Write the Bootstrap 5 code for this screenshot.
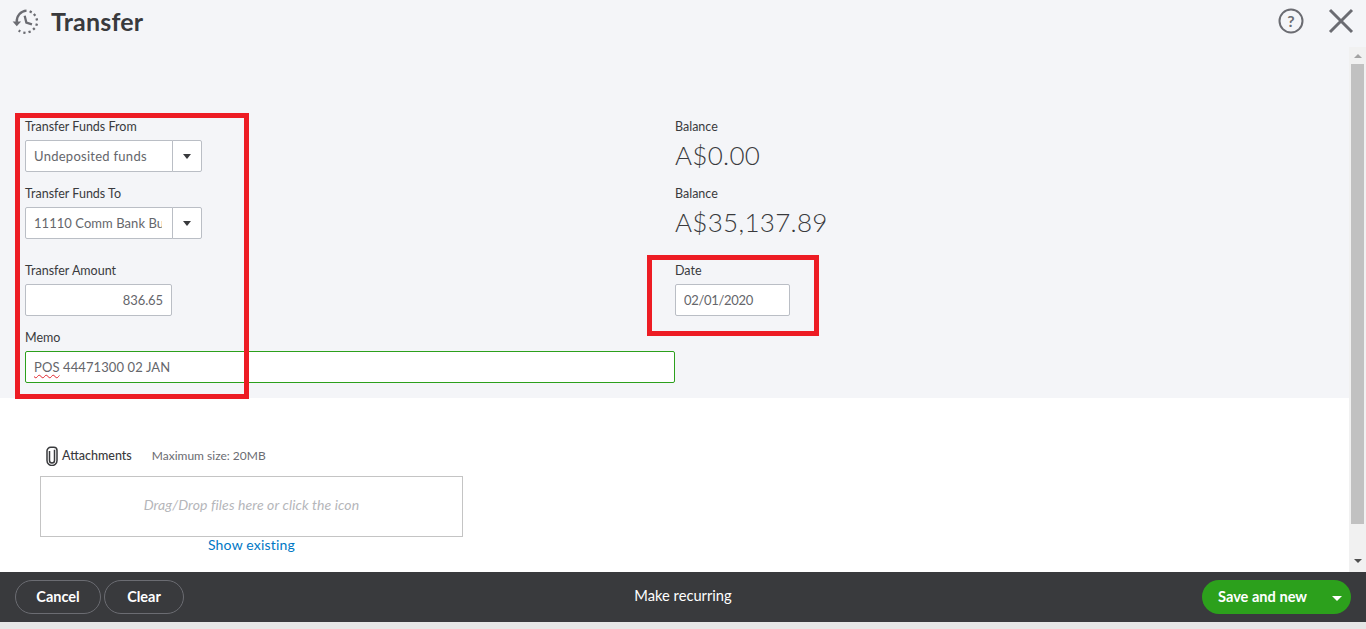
<!DOCTYPE html>
<html lang="en">
<head>
<meta charset="utf-8">
<title>Transfer</title>
<link rel="stylesheet" href="https://cdn.jsdelivr.net/npm/bootstrap@5.3.0/dist/css/bootstrap.min.css">
<style>
html,body{height:100%;overflow:hidden}
body{font-family:"Lato","Liberation Sans",sans-serif;color:#393a3d;background:#e6e6e6;font-size:13px}
.shell{position:relative;height:629px;width:1366px}
.top-bar{height:47px;background:#f4f5f8;padding:0 12px 5px 12px}
.top-title{font-size:25px;font-weight:700;color:#393a3d;line-height:1;margin:0 0 0 12px;letter-spacing:.2px}
.tools{gap:24px}
.mid{height:525px}
.content{width:1349px}
.gray-panel{background:#f4f5f8;height:351px;padding:72px 0 0 25px}
.form-grid{display:grid;grid-template-columns:650px 200px;grid-template-rows:67px 77px 67px auto}
.fld-label{display:block;font-size:12.5px;line-height:16px;margin:0 0 5px;color:#393a3d}
.fld-input.form-control{height:32px;font-size:13px;letter-spacing:.27px;font-weight:400;color:#65666b;border:1px solid #babec5;border-radius:2px;padding:0 8px;background:#fff;box-shadow:none}
.w-acct{width:177px}
.w-amt{width:147px}
.w-date{width:115px}
.combo .form-control{flex:none;width:148px}
.fld-input.clip-input.form-control{padding-right:10px;letter-spacing:.05px}
.caret-btn.btn{width:30px;height:32px;padding:0;background:#fff;border:1px solid #babec5;border-left-color:#babec5;border-radius:0 2px 2px 0;display:flex;align-items:center;justify-content:center}
.tri{display:block;width:0;height:0;border-left:4px solid transparent;border-right:4px solid transparent;border-top:5px solid #393a3d}
.fld-input.num-input.form-control{letter-spacing:-.1px}
.fld-input.date-input.form-control{letter-spacing:-.3px}
.amt-input.form-control{text-align:right}
.memo-wrap{grid-column:1 / span 2;width:650px}
.fld-input.memo-box.form-control{border-color:#2ca01c;line-height:30px;letter-spacing:.1px;font-size:13px;width:650px}
.spell{text-decoration:underline wavy #e0262e 1px;text-underline-offset:2px}
.bal-value{font-size:26px;line-height:32px;letter-spacing:.3px;color:#393a3d;font-weight:300;margin-top:-1px}
.white-panel{background:#fff;height:174px;padding:48px 0 0 40px}
.att-row{height:20px;font-size:12.5px;margin-bottom:10px;padding-left:5px}
.att-name{color:#393a3d;margin-left:3px;font-weight:500}
.att-max{color:#6b6c72;margin-left:20px;font-size:12px}
.drop-box{width:423px;height:61px;border:1px solid #c4c4c4;color:#b5b6ba;font-style:italic;font-size:14px;letter-spacing:.1px;padding-bottom:5px}
.show-link{width:423px;display:block;text-align:center;color:#0077c5;text-decoration:none;font-size:14px;line-height:16px;letter-spacing:.2px}
.scroll-track{width:17px;height:525px;background:#f1f1f1;padding:0 2px}
.arrow-up,.arrow-down{display:block;width:0;height:0;border-left:4px solid transparent;border-right:4px solid transparent;margin:0 auto}
.arrow-up{border-bottom:4px solid #a3a3a3;margin-top:7px;margin-bottom:6px}
.arrow-down{border-top:4px solid #505050;margin-top:35px}
.scroll-thumb{width:13px;height:460px;background:#c1c1c1;flex:none}
.foot{height:50px;background:#393a3d;padding:0 15px}
.pill.btn{height:34px;border:1px solid #6b6c72;border-radius:17px;background:transparent;color:#fff;font-weight:700;font-size:14.5px;padding:0;line-height:1}
.pill-cancel{width:86px}
.pill-clear{width:80px;margin-left:3px}
.recur{position:absolute;left:0;right:0;text-align:center;color:#fff;font-size:14.7px;pointer-events:none;padding-bottom:3px}
.save.btn{width:149px;height:34px;border:0;border-radius:17px;background:#2ca01c;color:#fff;font-weight:700;font-size:14.6px;padding:0 9px 0 16px}
.tri-white{display:block;width:0;height:0;border-left:5px solid transparent;border-right:5px solid transparent;border-top:5px solid #fff;margin-top:3px}
.red-mark{position:absolute;border:5px solid #ed1c24;pointer-events:none}
.mark-left{left:15px;top:113px;width:234px;height:286px}
.mark-date{left:647px;top:255px;width:172px;height:81px}
</style>
</head>
<body>
<div class="shell">
  <header class="top-bar d-flex align-items-center justify-content-between">
    <div class="d-flex align-items-center">
      <svg width="27" height="27" viewBox="0 0 26 26" fill="none" stroke="#6b6c72" stroke-width="2.2" aria-hidden="true">
        <path d="M4.6 13.5A10 10 0 0 1 14 2.6" />
        <path d="M17 3.2l2 1M21 5.8l1.5 1.6M23.6 10l.5 2.1M24 15l-.6 2.1M21.9 19.4l-1.6 1.5M18 22.6l-2.1.7M13 23.9l-2.1-.3M8 22.6l-1.6-1"/>
        <path d="M.6 13l4 4.6L8.8 13z" fill="#6b6c72" stroke="none"/>
        <path d="M12.2 7.5l1.6 6.5 5.4 1.8" stroke-width="2.2"/>
      </svg>
      <h1 class="top-title">Transfer</h1>
    </div>
    <div class="tools d-flex align-items-center">
      <svg width="26" height="26" viewBox="0 0 26 26" fill="none" aria-hidden="true">
        <circle cx="13" cy="13" r="11.5" stroke="#6b6c72" stroke-width="2"/>
        <text x="13" y="18.5" text-anchor="middle" font-family="Lato, sans-serif" font-size="16" font-weight="700" fill="#6b6c72">?</text>
      </svg>
      <svg width="26" height="26" viewBox="0 0 26 26" fill="none" stroke="#6b6c72" stroke-width="3" aria-hidden="true">
        <path d="M2 2l22 22M24 2L2 24"/>
      </svg>
    </div>
  </header>
  <div class="mid d-flex">
    <main class="content">
      <section class="gray-panel">
        <div class="form-grid">
          <div>
            <label class="fld-label">Transfer Funds From</label>
            <div class="combo input-group flex-nowrap w-acct">
              <input class="fld-input form-control" value="Undeposited funds">
              <button class="caret-btn btn" type="button" aria-label="Open"><span class="tri"></span></button>
            </div>
          </div>
          <div>
            <div class="fld-label">Balance</div>
            <div class="bal-value">A$0.00</div>
          </div>
          <div>
            <label class="fld-label">Transfer Funds To</label>
            <div class="combo input-group flex-nowrap w-acct">
              <input class="fld-input clip-input form-control" value="11110 Comm Bank Business">
              <button class="caret-btn btn" type="button" aria-label="Open"><span class="tri"></span></button>
            </div>
          </div>
          <div>
            <div class="fld-label">Balance</div>
            <div class="bal-value">A$35,137.89</div>
          </div>
          <div>
            <label class="fld-label">Transfer Amount</label>
            <input class="fld-input num-input amt-input form-control w-amt" value="836.65">
          </div>
          <div>
            <label class="fld-label">Date</label>
            <input class="fld-input date-input form-control w-date" value="02/01/2020">
          </div>
          <div class="memo-wrap">
            <label class="fld-label">Memo</label>
            <div class="fld-input memo-box form-control"><span class="spell">POS</span> 44471300 02 JAN</div>
          </div>
        </div>
      </section>
      <section class="white-panel">
        <div class="att-row d-flex align-items-center">
          <svg width="14" height="20" viewBox="0 0 14 20" fill="none" stroke="#393a3d" stroke-width="1.5" aria-hidden="true">
            <path d="M4.5 5v9.5a2.5 2.5 0 0 0 5 0V3.8M2 5.5v9a5 5 0 0 0 10 0v-10a3.2 3.2 0 0 0-3.2-3.2H6A3.8 3.8 0 0 0 2 5.5"/>
          </svg>
          <span class="att-name">Attachments</span>
          <span class="att-max">Maximum size: 20MB</span>
        </div>
        <div class="drop-box d-flex align-items-center justify-content-center">Drag/Drop files here or click the icon</div>
        <a class="show-link" href="#">Show existing</a>
      </section>
    </main>
    <aside class="scroll-track d-flex flex-column align-items-center">
      <span class="arrow-up"></span>
      <span class="scroll-thumb"></span>
      <span class="arrow-down"></span>
    </aside>
  </div>
  <footer class="foot d-flex align-items-center justify-content-between position-relative">
    <div class="d-flex">
      <button class="pill pill-cancel btn" type="button">Cancel</button>
      <button class="pill pill-clear btn" type="button">Clear</button>
    </div>
    <div class="recur">Make recurring</div>
    <button class="save btn d-flex align-items-center justify-content-between" type="button"><span>Save and new</span><span class="tri-white"></span></button>
  </footer>
  <div class="red-mark mark-left"></div>
  <div class="red-mark mark-date"></div>
</div>
<script src="https://cdn.jsdelivr.net/npm/bootstrap@5.3.0/dist/js/bootstrap.bundle.min.js"></script>
</body>
</html>
